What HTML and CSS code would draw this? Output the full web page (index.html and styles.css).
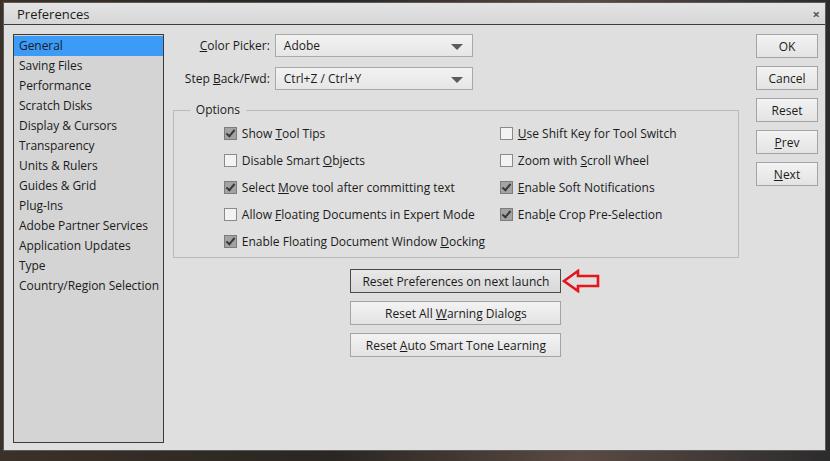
FILE: index.html
```html
<!DOCTYPE html>
<html lang="en">
<head>
    <meta charset="UTF-8">
    <meta name="viewport" content="width=device-width, initial-scale=1.0">
    <title>Preferences</title>
    <link rel="stylesheet" href="styles.css">
</head>
<body>
    <div class="window">
        <div class="titlebar">
            <span class="title">Preferences</span>
            <span class="close">&times;</span>
        </div>
        <div class="content">
            <ul class="sidebar">
                <li class="selected">General</li>
                <li>Saving Files</li>
                <li>Performance</li>
                <li>Scratch Disks</li>
                <li>Display &amp; Cursors</li>
                <li>Transparency</li>
                <li>Units &amp; Rulers</li>
                <li>Guides &amp; Grid</li>
                <li>Plug-Ins</li>
                <li>Adobe Partner Services</li>
                <li>Application Updates</li>
                <li>Type</li>
                <li>Country/Region Selection</li>
            </ul>

            <div class="main">
                <div class="field-row">
                    <label class="field-label"><u>C</u>olor Picker:</label>
                    <div class="select">Adobe<span class="arrow"></span></div>
                </div>
                <div class="field-row">
                    <label class="field-label">Step <u>B</u>ack/Fwd:</label>
                    <div class="select">Ctrl+Z / Ctrl+Y<span class="arrow"></span></div>
                </div>

                <div class="group">
                    <span class="group-title">Options</span>
                    <div class="options">
                        <div class="option"><span class="check on"></span><span>Show <u>T</u>ool Tips</span></div>
                        <div class="option"><span class="check"></span><span><u>U</u>se Shift Key for Tool Switch</span></div>
                        <div class="option"><span class="check"></span><span>Disable Smart <u>O</u>bjects</span></div>
                        <div class="option"><span class="check"></span><span>Zoom with <u>S</u>croll Wheel</span></div>
                        <div class="option"><span class="check on"></span><span>Select <u>M</u>ove tool after committing text</span></div>
                        <div class="option"><span class="check on"></span><span><u>E</u>nable Soft Notifications</span></div>
                        <div class="option"><span class="check"></span><span>Allow <u>F</u>loating Documents in Expert Mode</span></div>
                        <div class="option"><span class="check on"></span><span>Enab<u>l</u>e Crop Pre-Selection</span></div>
                        <div class="option"><span class="check on"></span><span>Enable Floating Document Window <u>D</u>ocking</span></div>
                    </div>
                </div>

                <div class="reset-buttons">
                    <div class="reset-wrap">
                        <button class="btn wide default">Reset Preferences on next launch</button>
                        <svg class="pointer" width="40" height="24" viewBox="0 0 40 24">
                            <path d="M2 12 L16 2 L16 7 L36 7 L36 17 L16 17 L16 22 Z" fill="none" stroke="#e5151b" stroke-width="2.6" stroke-linejoin="miter"/>
                        </svg>
                    </div>
                    <button class="btn wide">Reset All <u>W</u>arning Dialogs</button>
                    <button class="btn wide">Reset <u>A</u>uto Smart Tone Learning</button>
                </div>
            </div>

            <div class="actions">
                <button class="btn">OK</button>
                <button class="btn">Cancel</button>
                <button class="btn">Reset</button>
                <button class="btn"><u>P</u>rev</button>
                <button class="btn"><u>N</u>ext</button>
            </div>
        </div>
    </div>
</body>
</html>
```

FILE: styles.css
```css
body {
    margin: 0;
    padding: 2px 4px 4px 3px;
    background: linear-gradient(90deg, #3b3129 0%, #2a2622 40%, #5a4a44 70%, #2c2c2c 100%);
    font-family: "Open Sans", "Noto Sans", sans-serif;
    font-size: 12px;
    color: #1b1b1b;
    height: 455px;
    box-sizing: border-box;
}

.window {
    height: 100%;
    background-color: #dfdfdf;
    border: 1px solid #5a5a5a;
    box-sizing: border-box;
    display: flex;
    flex-direction: column;
}

.titlebar {
    height: 21px;
    display: flex;
    align-items: center;
    justify-content: space-between;
    padding: 0 5px 0 13px;
    background: linear-gradient(#e4e4e4, #d6d6d6);
    border-bottom: 1px solid #3c3c3c;
}

.title {
    font-size: 13px;
}

.close {
    font-size: 13px;
    color: #555;
    font-weight: bold;
}

.content {
    flex: 1;
    display: flex;
    padding: 9px 7px 7px 9px;
}

.sidebar {
    list-style: none;
    margin: 0;
    padding: 1px 0 0 0;
    width: 149px;
    background-color: #d4d4d4;
    border: 1px solid #3a3a3a;
    letter-spacing: -0.05px;
}

.sidebar li {
    height: 20px;
    line-height: 20px;
    padding-left: 5px;
    white-space: nowrap;
}

.sidebar li.selected {
    background-color: #3d9bf8;
}

.main {
    width: 567px;
    margin-left: 9px;
    display: flex;
    flex-direction: column;
}

.field-row {
    display: flex;
    align-items: center;
    margin-bottom: 10px;
}

.field-label {
    width: 97px;
    text-align: right;
    margin-right: 5px;
}

.select {
    position: relative;
    width: 188px;
    height: 21px;
    line-height: 21px;
    padding-left: 8px;
    border: 1px solid #a9a9a9;
    background: linear-gradient(#f2f2f2, #e6e6e6);
}

.arrow {
    position: absolute;
    right: 9px;
    top: 9px;
    border-left: 6px solid transparent;
    border-right: 6px solid transparent;
    border-top: 6px solid #5c5c5c;
}

.group {
    margin-top: 10px;
    height: 146px;
    border: 1px solid #b9b9b9;
}

.group-title {
    display: block;
    width: fit-content;
    margin: -9px 0 0 16px;
    padding: 0 6px;
    line-height: 16px;
    background-color: #dfdfdf;
}

.options {
    display: grid;
    grid-template-columns: 276px auto;
    grid-auto-rows: 27px;
    padding: 2px 0 0 50px;
}

.option {
    display: flex;
    align-items: center;
    white-space: nowrap;
}

.check {
    width: 11px;
    height: 11px;
    margin-right: 5px;
    border: 1px solid #8a8a8a;
    background-color: #f3f3f3;
    position: relative;
}

.check.on {
    background-color: #a3a3a3;
    border-color: #7c7c7c;
}

.check.on::after {
    content: "";
    position: absolute;
    left: 3px;
    top: 0px;
    width: 3px;
    height: 7px;
    border-right: 2px solid #3a3a3a;
    border-bottom: 2px solid #3a3a3a;
    transform: rotate(40deg);
}

.reset-buttons {
    margin-top: 11px;
    display: flex;
    flex-direction: column;
    align-items: center;
    gap: 8px;
}

.reset-wrap {
    position: relative;
}

.pointer {
    position: absolute;
    left: 212px;
    top: 0;
}

.btn {
    font-family: inherit;
    font-size: 12px;
    color: #1b1b1b;
    height: 24px;
    padding: 0;
    border: 1px solid #a4a4a4;
    background: linear-gradient(#f3f3f3, #e3e3e3);
}

.btn.wide {
    width: 211px;
    height: 24px;
}

.btn.default {
    border-color: #4a4a4a;
    background: linear-gradient(#e8e8e8, #d8d8d8);
}

.actions {
    margin-left: 17px;
    display: flex;
    flex-direction: column;
    gap: 8px;
}

.actions .btn {
    width: 62px;
}
```
